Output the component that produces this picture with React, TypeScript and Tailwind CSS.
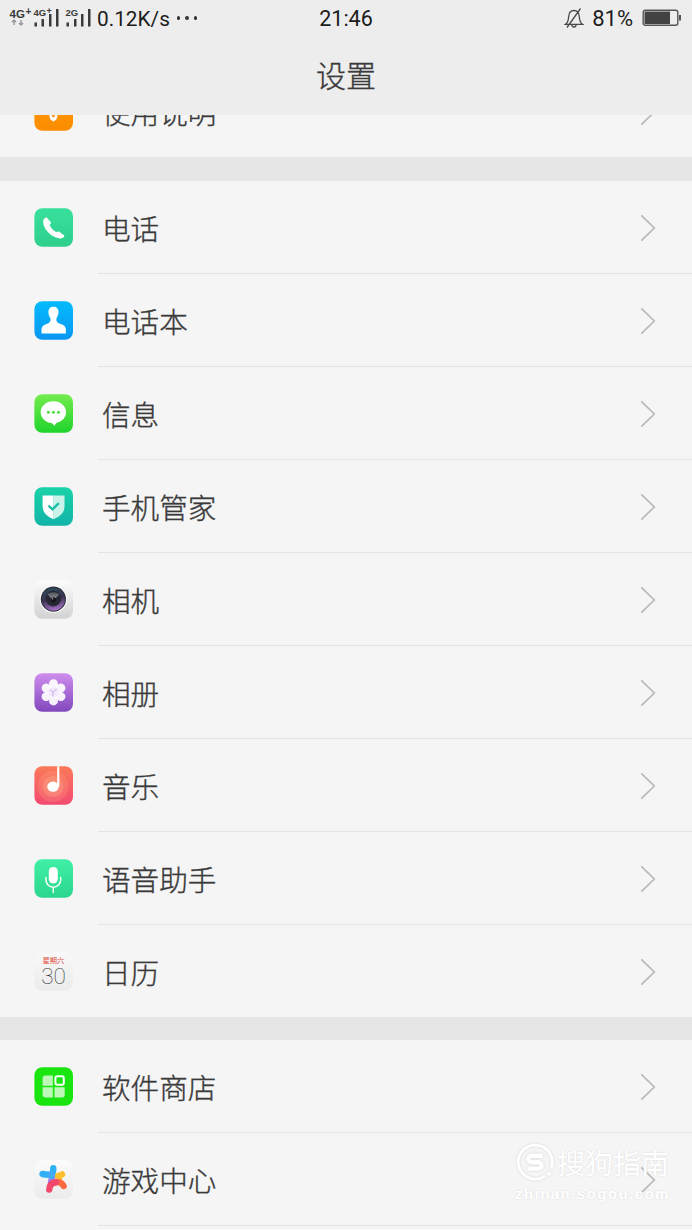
import type { ReactNode } from 'react'

const CJK = "font-['Noto_Sans_CJK_SC',sans-serif]"

type Item = { label: string; icon: ReactNode }

// App tiles, all drawn on a 39 × 39 rounded square
function Tile({ id, from, to, children }: { id: string; from: string; to: string; children?: ReactNode }) {
  return (
    <svg viewBox="0 0 39 39" className="h-[39px] w-[39px] shrink-0">
      <defs>
        <linearGradient id={id} x1="0" y1="0" x2="0" y2="1">
          <stop offset="0" stopColor={from} />
          <stop offset="1" stopColor={to} />
        </linearGradient>
        <clipPath id={`${id}-clip`}>
          <rect x="0.4" y="0.2" width="38.6" height="38.6" rx="8" />
        </clipPath>
      </defs>
      <rect x="0.4" y="0.2" width="38.6" height="38.6" rx="8" fill={`url(#${id})`} />
      <g clipPath={`url(#${id}-clip)`}>{children}</g>
    </svg>
  )
}

const guideIcon = (
  <Tile id="guide" from="#ff9a0a" to="#fb8c00">
    <path d="M15.500 20h7.800v4.500c0 2.300-1.600 3.900-3.900 5c-2.300-1.100-3.900-2.700-3.900-5z" fill="#fff" />
    <circle cx="19.400" cy="23.800" r="1.600" fill="#fb9a20" />
  </Tile>
)

const phoneIcon = (
  <Tile id="phone" from="#38e09c" to="#2fcf8c">
    <path
      d="M9.200 12.600C9.600 10.800 11 9.300 12.700 9.400L17.100 14.600C17.300 15.400 15.600 16.600 15.700 17.300C16.900 20 19.300 22.600 22.200 23.900C23.100 24.200 24.100 23 25 23.500L30.300 27.400C30.500 29 28.200 30.500 26.200 30.500C17.500 29.900 8.600 20.900 9.200 12.600Z"
      fill="#fff"
    />
  </Tile>
)

const contactsIcon = (
  <Tile id="contacts" from="#04bbfb" to="#0a96f3">
    <path
      d="M19.300 5.700c3.500 0 5.200 2.100 5.200 5.100c0 2.400-.7 4.500-2 6.500c-.4 2.300.1 3.800 1.700 4.600l4.900 2.100c1.900.9 2.800 2.500 2.800 5v3.500H7.500v-3.500c0-2.500.9-4.100 2.800-5l4.500-2.100c1.600-.8 2-2.300 1.600-4.600c-1.300-2-2-4.100-2-6.500c0-3 1.600-5.100 4.900-5.100z"
      fill="#fff"
    />
  </Tile>
)

const messageIcon = (
  <Tile id="message" from="#74ec4e" to="#20d32c">
    <path
      d="M19.400 7.200c7.200 0 12.700 4.700 12.700 11c0 5-3.600 9-8.700 10.300c-1.200.4-2 1.600-3.100 3.500c-1.100-1.700-1.700-2.700-3.400-3c-5.800-1.100-10.200-5.400-10.200-10.800c0-6.300 5.500-11 12.700-11z"
      fill="#fff"
    />
    <circle cx="14.400" cy="18.200" r="1.500" fill="#4fdc40" />
    <circle cx="19.400" cy="18.200" r="1.500" fill="#4fdc40" />
    <circle cx="24.400" cy="18.200" r="1.500" fill="#4fdc40" />
  </Tile>
)

const managerIcon = (
  <Tile id="manager" from="#19d2a8" to="#12b4a8">
    <path d="M8.600 8.600H19.600V32.200C13.100 29.800 8.600 25.400 8.600 19.200Z" fill="#fff" />
    <path d="M30.500 8.600H19.500V32.200C26 29.800 30.500 25.400 30.500 19.200Z" fill="#c9f3e8" />
    <path d="M14.500 18.700l4 3.700l6.300-6.300" fill="none" stroke="#17bfa6" strokeWidth="2.300" />
  </Tile>
)

const cameraIcon = (
  <Tile id="camera" from="#fcfcfc" to="#d2d2d2">
    <defs>
      <linearGradient id="lens" x1="0.300" y1="0" x2="0.500" y2="1">
        <stop offset="0" stopColor="#2b4a59" />
        <stop offset="0.500" stopColor="#3b3350" />
        <stop offset="1" stopColor="#a873c9" />
      </linearGradient>
      <linearGradient id="glare" x1="0" y1="0" x2="0" y2="1">
        <stop offset="0" stopColor="#4a5158" />
        <stop offset="1" stopColor="#8a8b8e" />
      </linearGradient>
    </defs>
    <circle cx="19.400" cy="19.200" r="13.600" fill="#fff" />
    <circle cx="19.400" cy="19.200" r="12.600" fill="#33303c" />
    <circle cx="19.400" cy="19.200" r="11.500" fill="url(#lens)" />
    <circle cx="19.400" cy="18.600" r="7.800" fill="#262833" />
    <path d="M13.400 14.300c3.500-2.600 8.500-2.600 12 0l-3.600 3.700h-4.800z" fill="url(#glare)" />
    <circle cx="19.400" cy="19.800" r="2.600" fill="#15151c" />
    <circle cx="18.500" cy="18.700" r="0.800" fill="#a9a9ad" />
  </Tile>
)

const PETALS = [0, 60, 120, 180, 240, 300]

const albumIcon = (
  <Tile id="album" from="#cf8ded" to="#8148bd">
    {PETALS.map((deg) => (
      <path
        key={deg}
        d="M19.500 19.300C17.500 16.500 15 14.300 15 10.700a4.500 4.500 0 0 1 9 0C24 14.300 21.500 16.500 19.500 19.300Z"
        transform={`rotate(${deg} 19.500 19.300)`}
        fill="#fff"
        fillOpacity="0.920"
      />
    ))}
    <circle cx="19.500" cy="19.300" r="5" fill="#f3eafb" />
    <path d="M19.500 19.300l-3.500-2.500M19.500 19.300l3-3.500M19.500 19.300l-.8 4" stroke="#b79be0" strokeWidth="0.800" />
  </Tile>
)

const musicIcon = (
  <Tile id="music" from="#fb7a58" to="#f34a72">
    <circle cx="19" cy="20.500" r="15.500" fill="#ffb080" fillOpacity="0.220" />
    <circle cx="19" cy="20.500" r="10.500" fill="#ffc090" fillOpacity="0.280" />
    <ellipse cx="19" cy="20.600" rx="5.800" ry="5.200" fill="#fff" />
    <rect x="23.200" y="0" width="2.100" height="20.500" fill="#fff" />
  </Tile>
)

const voiceIcon = (
  <Tile id="voice" from="#40f0a6" to="#2bd58d">
    <rect x="14.800" y="8" width="9" height="16.600" rx="4.500" fill="#fff" />
    <path
      d="M11.900 18.500v2.300a7.400 7.400 0 0 0 14.800 0v-2.300M19.300 28.200v5.400"
      fill="none"
      stroke="#fff"
      strokeWidth="1.400"
      strokeLinecap="round"
    />
  </Tile>
)

const calendarIcon = (
  <Tile id="calendar" from="#f8f8f8" to="#ebebeb">
    <text x="19.400" y="11.400" textAnchor="middle" fontSize="7.300" fill="#e0493c" className={CJK}>
      星期六
    </text>
    <text
      x="19.600"
      y="32.200"
      textAnchor="middle"
      fontSize="22.500"
      fill="#333"
      className="font-['Roboto',sans-serif] font-thin"
    >
      30
    </text>
  </Tile>
)

const storeIcon = (
  <Tile id="store" from="#1be510" to="#1be510">
    <path d="M11.500 8.500h7.300v10.200H8.600v-7.300a2.900 2.900 0 0 1 2.900-2.900z" fill="#bdf8b8" />
    <path d="M8.600 20.300h10.200v10.200h-7.300a2.900 2.900 0 0 1-2.900-2.900z" fill="#bdf8b8" />
    <path d="M20.500 20.300h10.200v7.300a2.900 2.900 0 0 1-2.900 2.900h-7.300z" fill="#bdf8b8" />
    <rect x="21.400" y="9.300" width="8.400" height="8.400" rx="1.900" fill="none" stroke="#fff" strokeWidth="2" />
  </Tile>
)

const gameIcon = (
  <Tile id="game" from="#fbfbfb" to="#ebebeb">
    <g fill="none" strokeWidth="6.400" strokeLinecap="round" strokeLinejoin="round">
      <path d="M25 19L24 16Q26.500 15.600 28 14.500" stroke="#fcc02e" />
      <path d="M17 22L18 18" stroke="#a77cf0" />
      <path d="M8.500 14Q14.500 15.200 17.500 14.500Q19.500 12 19.300 8.200" stroke="#31b1f5" />
      <path d="M17.500 14.500V16" stroke="#45aaf5" />
      <path d="M22 22.200Q27.500 21.500 29.600 26" stroke="#fb6a42" />
      <path d="M15.300 29.500Q15.500 23 22 22.200" stroke="#f2486c" />
    </g>
  </Tile>
)

const APPS: Item[] = [
  { label: '电话', icon: phoneIcon },
  { label: '电话本', icon: contactsIcon },
  { label: '信息', icon: messageIcon },
  { label: '手机管家', icon: managerIcon },
  { label: '相机', icon: cameraIcon },
  { label: '相册', icon: albumIcon },
  { label: '音乐', icon: musicIcon },
  { label: '语音助手', icon: voiceIcon },
  { label: '日历', icon: calendarIcon },
]

const STORES: Item[] = [
  { label: '软件商店', icon: storeIcon },
  { label: '游戏中心', icon: gameIcon },
]

function Row({ item, last = false }: { item: Item; last?: boolean }) {
  return (
    <li className={`flex shrink-0 pl-[34px] ${last ? 'h-[92px]' : 'h-[93px]'}`}>
      <div className="flex w-16 shrink-0 items-center">{item.icon}</div>
      <div
        className={`flex flex-1 items-center justify-between pr-9 pl-1 ${last ? '' : 'border-b border-[#e4e4e4]'}`}
      >
        <span className="pt-0.5 text-[28.600px] leading-none font-light text-[#3a3a3a] [-webkit-text-stroke:0.350px_#3a3a3a]">
          {item.label}
        </span>
        <svg viewBox="0 0 16 28" className="mt-px h-7 w-4" fill="none" stroke="#b9b9b9" strokeWidth="1.700">
          <path d="M1.300 1.300L14.300 14L1.300 26.700" />
        </svg>
      </div>
    </li>
  )
}

function StatusBar() {
  return (
    <div className="grid h-9 grid-cols-[1fr_auto_1fr] items-center font-['Roboto',sans-serif] text-[21px] leading-none text-[#1c1c1c]">
      <div className="flex items-center pl-2">
        <svg viewBox="0 0 86 24" className="h-6 w-[86px]" fill="#3a3a3a">
          <g className="font-['Liberation_Sans',sans-serif] font-bold">
            <text x="1.500" y="11.500" fontSize="11.500">4G</text>
            <text x="17.500" y="9" fontSize="10">+</text>
            <text x="25.500" y="9.800" fontSize="9.500">4G</text>
            <text x="38.500" y="8" fontSize="9">+</text>
            <text x="57.500" y="9.800" fontSize="9.500">2G</text>
          </g>
          <path d="M6 19V14M4 16l2-2l2 2M13 14v5M11 17l2 2l2-2" fill="none" stroke="#969696" strokeWidth="1.400" />
          <path d="M26.500 16.500h2.500v4h-2.500zM33.500 13h2.500v7.500h-2.500zM41 8h2.500v12.500h-2.500zM48 3h2.500v17.500h-2.500z" />
          <path d="M58.500 16.500h2.500v4h-2.500zM66 13h2.500v7.500h-2.500zM73 8h2.500v12.500h-2.500zM80 3h2.500v17.500h-2.500z" />
        </svg>
        <span className="ml-[3px] pt-0.5 text-[20.800px]">0.12K/s</span>
        <span className="ml-[7px] flex gap-[5px]">
          <i className="size-[3.500px] rounded-full bg-[#333]" />
          <i className="size-[3.500px] rounded-full bg-[#333]" />
          <i className="size-[3.500px] rounded-full bg-[#333]" />
        </span>
      </div>
      <span className="pt-0.5 text-[21.500px]">21:46</span>
      <div className="flex items-center justify-end pr-2.5">
        <svg viewBox="0 0 20 22" className="h-[22px] w-5" fill="none" stroke="#4a4a4a" strokeWidth="1.300">
          <path d="M1.500 17.300C4 15.500 4.500 13 4.700 9.500C4.900 6 7 3.500 10 3.500C13 3.500 15.100 6 15.300 9.500C15.500 13 16 15.500 18.500 17.300ZM8 18a2 2 0 0 0 4 0M3 20.500L16.500 1.500" />
        </svg>
        <span className="ml-2 pt-px text-[22px]">81%</span>
        <svg viewBox="0 0 40 18" className="ml-[9px] h-[18px] w-10">
          <rect x="1.200" y="1.200" width="34.600" height="15.100" rx="2" fill="#eee" stroke="#555" strokeWidth="1.400" />
          <rect x="2.500" y="2.500" width="25.500" height="12.500" fill="#424242" />
          <rect x="37" y="6" width="2" height="5.500" fill="#555" />
        </svg>
      </div>
    </div>
  )
}

export default function App() {
  return (
    <div className={`relative flex h-[1230px] w-[692px] flex-col overflow-hidden bg-[#e6e6e6] ${CJK}`}>
      <header className="h-[115px] shrink-0 bg-[#ededed]">
        <StatusBar />
        <h1 className="pt-[23px] text-center text-[30px] leading-none font-light text-[#3a3a3a] [-webkit-text-stroke:0.350px_#3a3a3a]">
          设置
        </h1>
      </header>

      {/* First row is scrolled halfway under the header */}
      <ul className="flex h-[42px] shrink-0 flex-col justify-end overflow-hidden bg-[#f5f5f5]">
        <Row item={{ label: '使用说明', icon: guideIcon }} last />
      </ul>

      <ul className="mt-6 shrink-0 bg-[#f5f5f5]">
        {APPS.map((item, i) => (
          <Row key={item.label} item={item} last={i === APPS.length - 1} />
        ))}
      </ul>

      <ul className="mt-[23px] flex-1 bg-[#f5f5f5]">
        {STORES.map((item) => (
          <Row key={item.label} item={item} />
        ))}
      </ul>

      {/* Watermark */}
      <div className="absolute right-[22px] bottom-6 w-[155px] text-white [text-shadow:0_0_2px_#d8d8d8]">
        <div className="flex items-center">
          <svg viewBox="0 0 40 40" className="h-10 w-10 shrink-0 drop-shadow-[0_0_1px_#d4d4d4]" fill="none" stroke="#fff">
            <path d="M30 34A17 17 0 1 1 36 26.500" strokeWidth="2.800" />
            <path
              d="M27.500 13.800H17.500C12 13.800 12 20 17.500 20.200H22.500C28 20.400 28 26.600 22.500 26.600H12.500"
              strokeWidth="4.400"
            />
            <path d="M32.500 33l3-2.500" strokeWidth="3" />
          </svg>
          <span className="ml-0.5 text-[28px] leading-10 whitespace-nowrap">搜狗指南</span>
        </div>
        <div className="font-['Liberation_Sans',sans-serif] text-[15px] leading-6 font-bold tracking-[1.450px] whitespace-nowrap">
          zhinan.sogou.com
        </div>
      </div>
    </div>
  )
}
